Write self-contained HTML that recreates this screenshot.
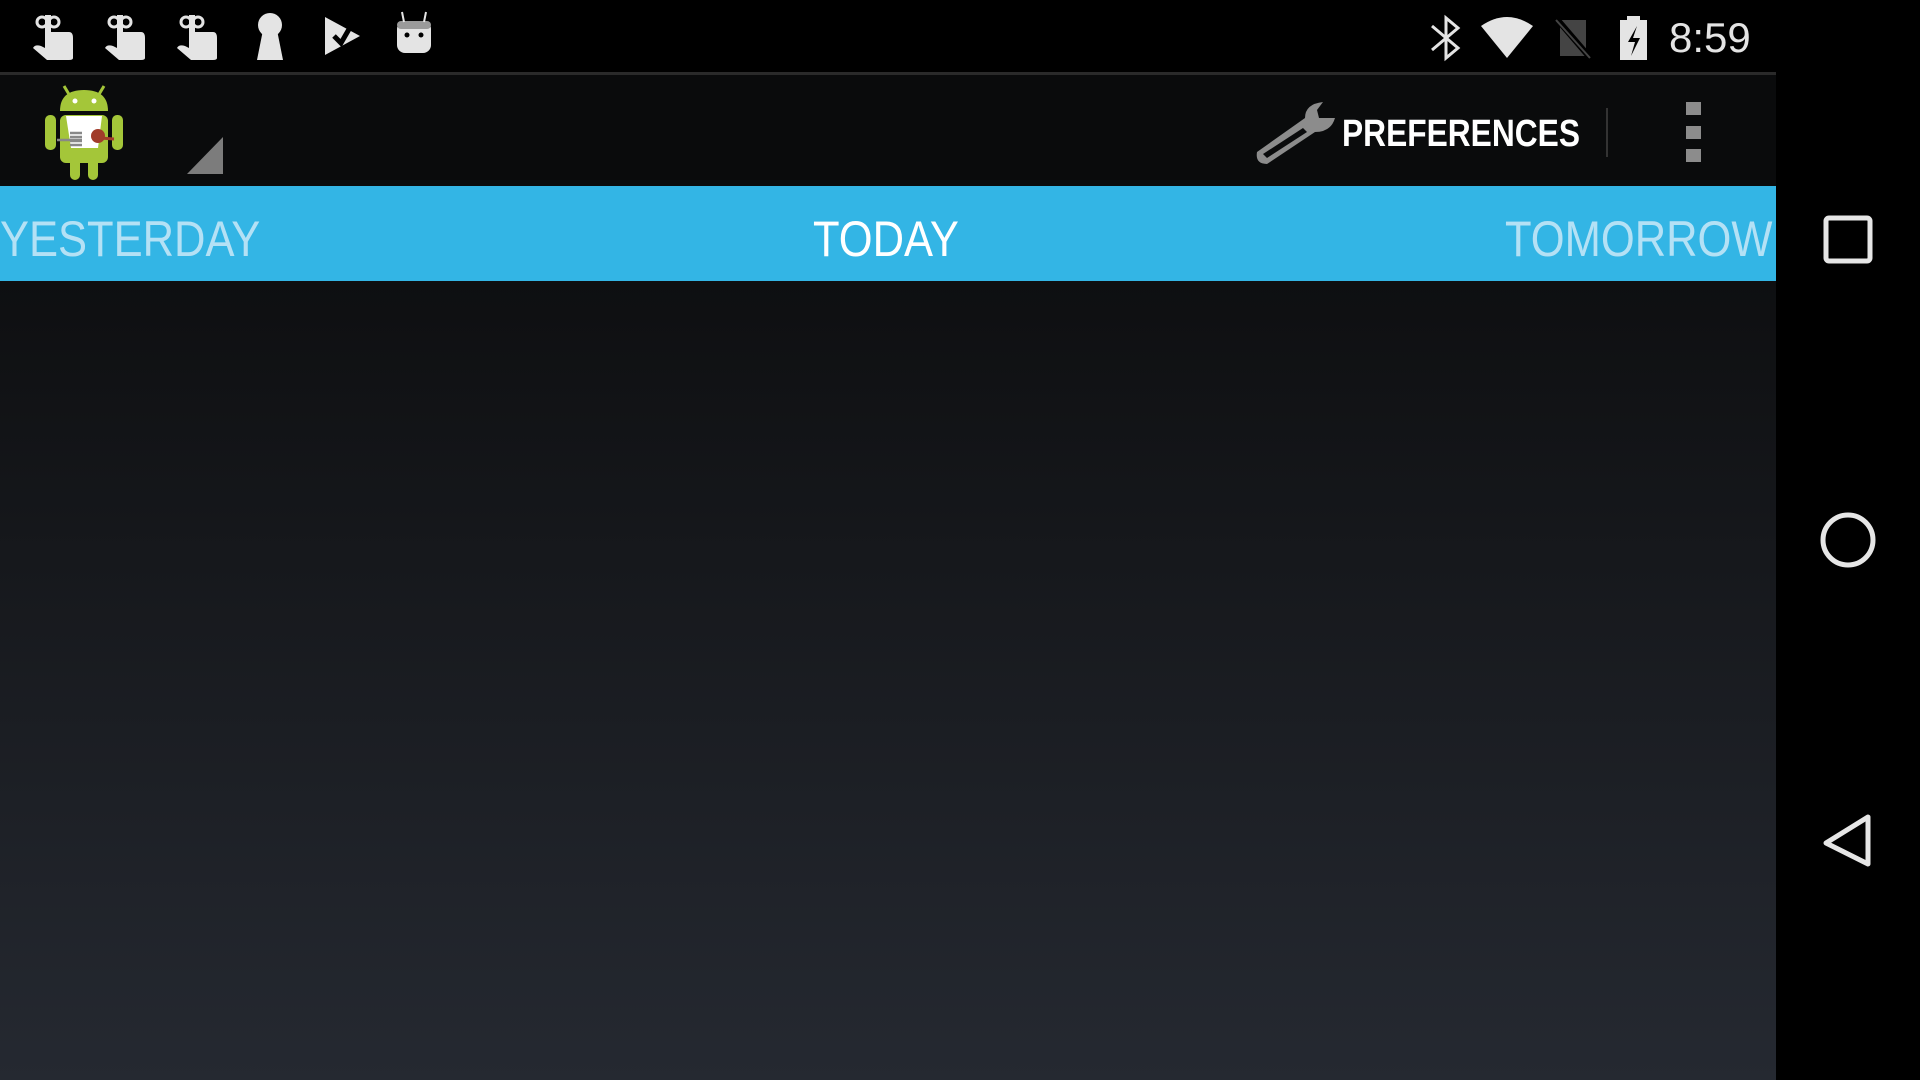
<!DOCTYPE html>
<html><head><style>
html,body{margin:0;padding:0;width:1920px;height:1080px;overflow:hidden;background:#000;font-family:"Liberation Sans",sans-serif}
.abs{position:absolute}
#status{left:0;top:0;width:1776px;height:72px;background:#000}
#line{left:0;top:72px;width:1776px;height:3px;background:#2a2a2a}
#ab{left:0;top:75px;width:1776px;height:111px;background:#0a0b0c}
#tabs{left:0;top:186px;width:1776px;height:95px;background:#33b5e5}
#content{left:0;top:281px;width:1776px;height:799px;background:linear-gradient(#0e0f11,#252931)}
#nav{left:1776px;top:0;width:144px;height:1080px;background:#000}
.tab{position:absolute;top:211px;font-size:50px;line-height:56px;transform:scaleX(.87);transform-origin:left top;white-space:nowrap}
</style></head><body>
<div id="status" class="abs"></div>
<div id="line" class="abs"></div>
<div id="ab" class="abs"></div>
<div id="tabs" class="abs"></div>
<div id="content" class="abs"></div>
<div id="nav" class="abs"></div>

<svg class="abs" style="left:0;top:0" width="1920" height="1080">
 <g fill="#e4e4e4">
  <g id="h" transform="translate(33,12)">
   <circle cx="9" cy="10" r="5" fill="none" stroke="#e4e4e4" stroke-width="3"/>
   <circle cx="21" cy="10" r="5" fill="none" stroke="#e4e4e4" stroke-width="3"/>
   <rect x="12" y="3" width="6" height="26"/>
   <path d="M12 20 H36 Q40 20 40 26 V46 Q40 48 36 48 H14 L0 36 Q2 32 8 34 L12 36Z"/>
  </g>
  <use href="#h" x="72"/>
  <use href="#h" x="144"/>
  <circle cx="270" cy="25" r="12"/>
  <path d="M263 30 H277 L283 60 H257Z"/>
  <path d="M325 17 L360 36 L325 55Z"/>
  <path d="M334 36 L341 43 L352 24" stroke="#000" stroke-width="5" fill="none"/>
  <rect x="397" y="21" width="34" height="32" rx="8"/>
  <rect x="397" y="21" width="34" height="8" rx="4" fill="#9a9a9a"/>
  <line x1="404" y1="22" x2="402" y2="12" stroke="#e4e4e4" stroke-width="2"/>
  <line x1="424" y1="22" x2="426" y2="12" stroke="#e4e4e4" stroke-width="2"/>
  <circle cx="407" cy="35" r="2.5" fill="#000"/><circle cx="421" cy="35" r="2.5" fill="#000"/>
 </g>
 <path d="M1432 26 L1458 48 L1446 58 V18 L1458 28 L1432 50" stroke="#e4e4e4" stroke-width="3" fill="none"/>
 <path d="M1481 26 Q1507 8 1533 26 L1507 58Z" fill="#e4e4e4"/>
 <path d="M1560 20 H1586 V56 H1560Z" fill="#444"/>
 <line x1="1556" y1="18" x2="1592" y2="60" stroke="#000" stroke-width="6"/>
 <line x1="1556" y1="20" x2="1590" y2="58" stroke="#444" stroke-width="2"/>
 <rect x="1620" y="20" width="27" height="40" fill="#e4e4e4"/>
 <rect x="1627" y="16" width="13" height="5" fill="#e4e4e4"/>
 <path d="M1637 26 L1628 42 H1635 L1631 56 L1640 38 H1633Z" fill="#000"/>
 <text x="1669" y="52" font-size="42" fill="#e4e4e4" font-family="Liberation Sans">8:59</text>

 <g fill="#a4c639">
  <line x1="70" y1="96" x2="64" y2="86" stroke="#a4c639" stroke-width="3"/>
  <line x1="98" y1="96" x2="104" y2="86" stroke="#a4c639" stroke-width="3"/>
  <path d="M60 111 Q60 90 84 90 Q108 90 108 111Z"/>
  <rect x="60" y="115" width="48" height="48" rx="6"/>
  <rect x="45" y="115" width="11" height="35" rx="5"/>
  <rect x="112" y="115" width="11" height="35" rx="5"/>
  <rect x="70" y="158" width="10" height="22" rx="5"/>
  <rect x="88" y="158" width="10" height="22" rx="5"/>
 </g>
 <circle cx="75" cy="101" r="2.5" fill="#fff"/><circle cx="94" cy="101" r="2.5" fill="#fff"/>
 <path d="M66 116 H102 L98 148 H71Z" fill="#fff"/>
 <path d="M57 140 H82 M70 133 H82 M70 137 H82 M70 141 H82 M70 145 H82" stroke="#888" stroke-width="2.5"/>
 <circle cx="98" cy="136" r="7" fill="#a13c2a"/>
 <line x1="100" y1="138" x2="114" y2="139" stroke="#a13c2a" stroke-width="3"/>
 <path d="M187 174 L223 137 V174Z" fill="#7c7c7c"/>

 <g transform="translate(1253,102)">
  <path d="M4 50 L52 16 Q52 2 70 0 L64 8 L66 16 L82 16 Q78 30 62 30 L14 62 Q2 62 4 50Z" fill="#8c8c8c"/>
  <path d="M10 52 L50 26 L54 30 L14 56Z" fill="#0a0b0c"/>
 </g>
 <text x="1342" y="146" font-size="38" font-weight="bold" fill="#fff" font-family="Liberation Sans" transform="translate(1342 0) scale(.835 1) translate(-1342 0)">PREFERENCES</text>
 <rect x="1606" y="108" width="2" height="49" fill="#333"/>
 <rect x="1686" y="102" width="15" height="13" fill="#8c8c8c"/>
 <rect x="1686" y="126" width="15" height="13" fill="#8c8c8c"/>
 <rect x="1686" y="149" width="15" height="13" fill="#8c8c8c"/>

 <rect x="1826" y="218" width="44" height="43" rx="3" fill="none" stroke="#e6e6e6" stroke-width="5"/>
 <circle cx="1848" cy="540" r="25" fill="none" stroke="#e6e6e6" stroke-width="5"/>
 <path d="M1868 817 V864 L1826 843Z" fill="none" stroke="#e6e6e6" stroke-width="5" stroke-linejoin="round"/>
</svg>

<div class="tab" style="left:0;color:#b4e1f5">YESTERDAY</div>
<div class="tab" style="left:813px;color:#fff">TODAY</div>
<div class="tab" style="left:1505px;color:#b4e1f5">TOMORROW</div>
</body></html>
